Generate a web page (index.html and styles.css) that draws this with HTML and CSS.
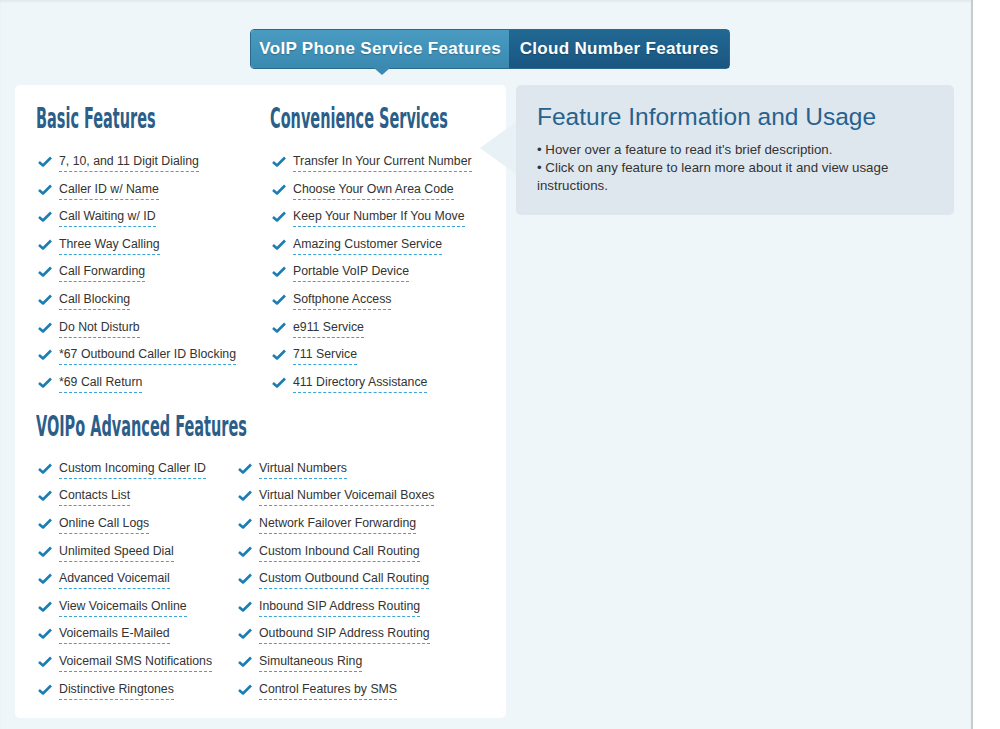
FILE: index.html
```html
<!DOCTYPE html>
<html lang="en">
<head>
    <meta charset="UTF-8">
    <meta name="viewport" content="width=device-width, initial-scale=1.0">
    <title>VoIP Phone Service Features</title>
    <link rel="stylesheet" href="styles.css">
</head>
<body>
    <div class="page">
        <!-- Tabs -->
        <div class="tabs">
            <a class="tab tab-active">VoIP Phone Service Features</a>
            <a class="tab">Cloud Number Features</a>
        </div>

        <div class="content">
            <!-- Feature lists -->
            <div class="card">
                <div class="two-cols">
                    <div class="col">
                        <h2>Basic Features</h2>
                        <ul class="features">
                            <li><span>7, 10, and 11 Digit Dialing</span></li>
                            <li><span>Caller ID w/ Name</span></li>
                            <li><span>Call Waiting w/ ID</span></li>
                            <li><span>Three Way Calling</span></li>
                            <li><span>Call Forwarding</span></li>
                            <li><span>Call Blocking</span></li>
                            <li><span>Do Not Disturb</span></li>
                            <li><span>*67 Outbound Caller ID Blocking</span></li>
                            <li><span>*69 Call Return</span></li>
                        </ul>
                    </div>
                    <div class="col">
                        <h2>Convenience Services</h2>
                        <ul class="features">
                            <li><span>Transfer In Your Current Number</span></li>
                            <li><span>Choose Your Own Area Code</span></li>
                            <li><span>Keep Your Number If You Move</span></li>
                            <li><span>Amazing Customer Service</span></li>
                            <li><span>Portable VoIP Device</span></li>
                            <li><span>Softphone Access</span></li>
                            <li><span>e911 Service</span></li>
                            <li><span>711 Service</span></li>
                            <li><span>411 Directory Assistance</span></li>
                        </ul>
                    </div>
                </div>

                <h2 class="advanced-title">VOIPo Advanced Features</h2>
                <div class="two-cols narrow">
                    <ul class="features">
                        <li><span>Custom Incoming Caller ID</span></li>
                        <li><span>Contacts List</span></li>
                        <li><span>Online Call Logs</span></li>
                        <li><span>Unlimited Speed Dial</span></li>
                        <li><span>Advanced Voicemail</span></li>
                        <li><span>View Voicemails Online</span></li>
                        <li><span>Voicemails E-Mailed</span></li>
                        <li><span>Voicemail SMS Notifications</span></li>
                        <li><span>Distinctive Ringtones</span></li>
                    </ul>
                    <ul class="features">
                        <li><span>Virtual Numbers</span></li>
                        <li><span>Virtual Number Voicemail Boxes</span></li>
                        <li><span>Network Failover Forwarding</span></li>
                        <li><span>Custom Inbound Call Routing</span></li>
                        <li><span>Custom Outbound Call Routing</span></li>
                        <li><span>Inbound SIP Address Routing</span></li>
                        <li><span>Outbound SIP Address Routing</span></li>
                        <li><span>Simultaneous Ring</span></li>
                        <li><span>Control Features by SMS</span></li>
                    </ul>
                </div>
            </div>

            <!-- Info panel -->
            <div class="info">
                <h3>Feature Information and Usage</h3>
                <p>&bull; Hover over a feature to read it's brief description.<br>
                &bull; Click on any feature to learn more about it and view usage instructions.</p>
            </div>
        </div>
    </div>
</body>
</html>
```

FILE: styles.css
```css
body {
    margin: 0;
    background-color: #fff;
    font-family: "Liberation Sans", Arial, sans-serif;
}
.page {
    width: 973px;
    height: 729px;
    box-sizing: border-box;
    background-color: #eef6fa;
    border-right: 2px solid #c9cccf;
    box-shadow: inset 0 2px 2px rgba(0, 0, 0, 0.05);
    padding-top: 29px;
}
.tabs {
    display: flex;
    width: 480px;
    height: 40px;
    margin-left: 250px;
    border: 1px solid #2a6a8e;
    border-radius: 4px;
    box-sizing: border-box;
    position: relative;
}
.tab {
    display: flex;
    align-items: center;
    justify-content: center;
    color: #fff;
    font-weight: bold;
    font-size: 17px;
    letter-spacing: 0.3px;
    text-shadow: 0 1px 1px rgba(0, 0, 0, 0.25);
    background: linear-gradient(#216893, #1a5681);
    width: 220px;
}
.tab-active {
    width: 259px;
    background: linear-gradient(#4a9bc1, #3989b1);
    border-radius: 3px 0 0 3px;
    position: relative;
}
.tab-active::after {
    content: "";
    position: absolute;
    left: 123px;
    bottom: -7px;
    border-top: 7px solid #3989b1;
    border-left: 8px solid transparent;
    border-right: 8px solid transparent;
}
.content {
    display: flex;
    align-items: flex-start;
    gap: 10px;
    margin: 16px 0 0 15px;
}
.card {
    width: 491px;
    height: 633px;
    box-sizing: border-box;
    background-color: #fff;
    border-radius: 5px;
    padding: 18px 0 0 21px;
}
.two-cols {
    display: grid;
    grid-template-columns: 234px 234px;
}
.two-cols.narrow {
    grid-template-columns: 200px 234px;
}
h2 {
    margin: 0 0 19px;
    font-family: "DejaVu Sans Condensed", "DejaVu Sans", sans-serif;
    font-weight: bold;
    font-size: 28px;
    line-height: 32px;
    color: #2b5e88;
    white-space: nowrap;
    transform: scaleX(0.575);
    transform-origin: left center;
}
.advanced-title {
    margin-top: 18px;
    margin-bottom: 18px;
}
.features {
    list-style: none;
    margin: 0;
    padding: 0;
    display: flex;
    flex-direction: column;
    gap: 9.6px;
}
.features li {
    display: flex;
    align-items: flex-start;
    font-size: 12.3px;
    line-height: 15px;
    color: #333;
}
.features li::before {
    content: "";
    width: 14px;
    height: 11px;
    margin: 2px 7px 0 2px;
    flex-shrink: 0;
    background: url("data:image/svg+xml,%3Csvg xmlns='http://www.w3.org/2000/svg' viewBox='0 0 14 11'%3E%3Cpath d='M1 6 L5 9.5 L13 1.5' fill='none' stroke='%231b7db3' stroke-width='2.6' stroke-linejoin='round'/%3E%3C/svg%3E") no-repeat;
}
.features span {
    padding-bottom: 2px;
    border-bottom: 1px dashed #3aa5d6;
    cursor: pointer;
}
.info {
    position: relative;
    width: 438px;
    height: 130px;
    box-sizing: border-box;
    background-color: #dfe7ee;
    border-radius: 5px;
    padding: 17px 20px 0 21px;
}
.info::before {
    content: "";
    position: absolute;
    left: -36px;
    top: 37px;
    border-right: 36px solid #e8f1f6;
    border-top: 26px solid transparent;
    border-bottom: 26px solid transparent;
}
.info h3 {
    margin: 0 0 9px;
    font-weight: normal;
    font-size: 24.5px;
    line-height: 30px;
    color: #26628f;
}
.info p {
    margin: 0;
    font-size: 13.3px;
    line-height: 18px;
    color: #333;
}
```
